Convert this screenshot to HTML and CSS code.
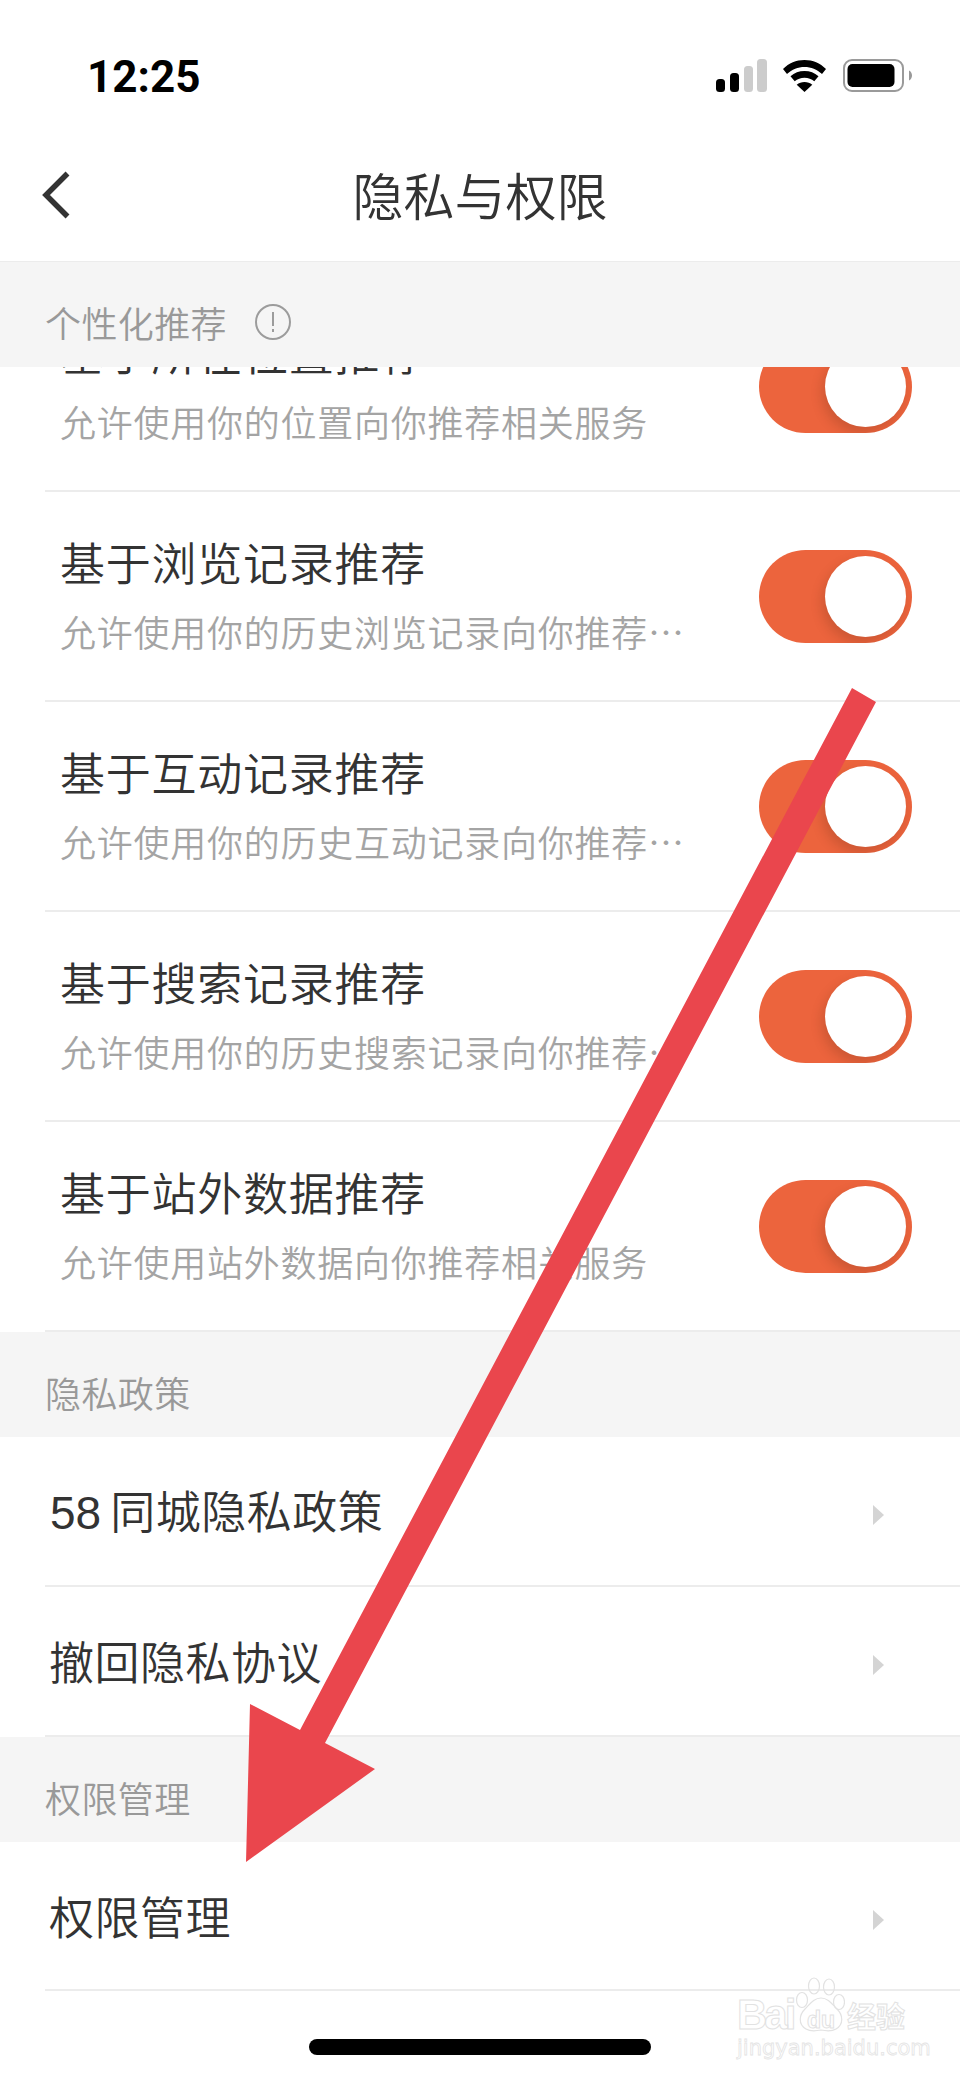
FILE: index.html
```html
<!DOCTYPE html>
<html lang="zh-CN">
<head>
<meta charset="utf-8">
<title>隐私与权限</title>
<link rel="stylesheet" href="styles.css">
</head>
<body>
<div class="page">
  <div class="status">
    <span class="time">12:25</span>
    <div class="status-icons">
      <svg class="signal" width="51" height="33" viewBox="0 0 51 33"><rect x="0" y="20" width="9" height="13" rx="3.5" fill="#000"/><rect x="14" y="14" width="9" height="19" rx="3.5" fill="#000"/><rect x="28" y="7" width="9" height="26" rx="3.5" fill="#ccc"/><rect x="41" y="0" width="10" height="33" rx="3.5" fill="#ccc"/></svg>
      <svg class="wifi" width="43" height="32" viewBox="0 0 43 32"><path d="M21.5 0C13 0 6 3 0 9l4 5c5-4.500 11-7 17.500-7S34 9.500 39 14l4-5C37 3 30 0 21.500 0z" fill="#000"/><path d="M21.500 11c-5.500 0-10 1.800-14 5.300l4.200 5c2.800-2.300 6-3.500 9.800-3.500s7 1.200 9.800 3.500l4.200-5c-4-3.500-8.500-5.300-14-5.300z" fill="#000"/><path d="M21.500 22c-3 0-5.500 1-7.800 2.800L21.500 32l7.800-7.200C27 23 24.500 22 21.500 22z" fill="#000"/></svg>
      <svg class="battery" width="69" height="33" viewBox="0 0 69 33"><rect x="1" y="1" width="59" height="31" rx="8" fill="none" stroke="#9a9a9a" stroke-width="2"/><rect x="4.500" y="5" width="47" height="23" rx="5" fill="#000"/><path d="M66 11.500c1.800.8 3 2.800 3 5s-1.200 4.200-3 5z" fill="#999"/></svg>
    </div>
  </div>
  <header class="nav">
    <svg class="back" width="28" height="50" viewBox="0 0 28 50"><path d="M25.500 3.500 4 25l21.500 21.500" fill="none" stroke="#333" stroke-width="5.500"/></svg>
    <h1 class="nav-title">隐私与权限</h1>
  </header>

  <div class="section section-first"><span>个性化推荐</span>
    <svg class="info" width="36" height="36" viewBox="0 0 36 36"><circle cx="18" cy="18" r="17" fill="none" stroke="#9c9c9c" stroke-width="2"/><rect x="17" y="8" width="2" height="14" fill="#9c9c9c"/><rect x="17" y="25" width="2" height="3" fill="#9c9c9c"/></svg>
  </div>

  <div class="clip-row">
    <div class="row switch-row">
      <div class="row-text"><div class="row-title">基于所在位置推荐</div><div class="row-sub">允许使用你的位置向你推荐相关服务</div></div>
      <div class="toggle"></div>
    </div>
  </div>
  <div class="row switch-row">
    <div class="row-text"><div class="row-title">基于浏览记录推荐</div><div class="row-sub">允许使用你的历史浏览记录向你推荐相关服务</div></div>
    <div class="toggle"></div>
  </div>
  <div class="row switch-row">
    <div class="row-text"><div class="row-title">基于互动记录推荐</div><div class="row-sub">允许使用你的历史互动记录向你推荐相关服务</div></div>
    <div class="toggle"></div>
  </div>
  <div class="row switch-row">
    <div class="row-text"><div class="row-title">基于搜索记录推荐</div><div class="row-sub">允许使用你的历史搜索记录向你推荐相关服务</div></div>
    <div class="toggle"></div>
  </div>
  <div class="row switch-row">
    <div class="row-text"><div class="row-title">基于站外数据推荐</div><div class="row-sub">允许使用站外数据向你推荐相关服务</div></div>
    <div class="toggle"></div>
  </div>

  <div class="section"><span>隐私政策</span></div>
  <div class="row link-row"><span class="link-title"><span class="num">58</span>同城隐私政策</span><svg class="caret" width="11" height="20" viewBox="0 0 11 20"><path d="M0 0l11 10L0 20z" fill="#d4d4d4"/></svg></div>
  <div class="row link-row"><span class="link-title">撤回隐私协议</span><svg class="caret" width="11" height="20" viewBox="0 0 11 20"><path d="M0 0l11 10L0 20z" fill="#d4d4d4"/></svg></div>
  <div class="section"><span>权限管理</span></div>
  <div class="row link-row link-last"><span class="link-title">权限管理</span><svg class="caret" width="11" height="20" viewBox="0 0 11 20"><path d="M0 0l11 10L0 20z" fill="#d4d4d4"/></svg></div>

  <div class="home-bar"></div>

  <svg class="arrow" width="960" height="2079" viewBox="0 0 960 2079"><path d="M852 688 876 702 325 1743 375 1769 246 1862 250 1704 300 1730z" fill="#ea464d"/></svg>

  <div class="watermark">
    <div class="wm-top">
      <span class="wm-bai">Bai</span>
      <div class="wm-paw">
        <svg width="50" height="56" viewBox="0 0 50 56"><g fill="none" stroke="#e2e2e2" stroke-width="1.200"><ellipse cx="7" cy="23" rx="5.500" ry="7.500"/><ellipse cx="19" cy="9" rx="5.500" ry="8"/><ellipse cx="34" cy="10" rx="5.500" ry="8"/><ellipse cx="44" cy="25" rx="5.500" ry="7.500"/><path d="M26 21c7 0 11 6 16 11 6 6 7 15-1 20-5 3-10 2-15 1-5 1-10 2-15-1-8-5-7-14-1-20 5-5 9-11 16-11z"/></g></svg>
        <span class="wm-du">du</span>
      </div>
      <span class="wm-jy">经验</span>
    </div>
    <div class="wm-url">jingyan.baidu.com</div>
  </div>
</div>
</body>
</html>
```

FILE: styles.css
```css
* { box-sizing: border-box; }
html, body { margin: 0; padding: 0; background: #fff; }
body { font-family: "Noto Sans CJK SC", "Liberation Sans", sans-serif; font-weight: 350; }
.page { position: relative; width: 960px; height: 2079px; overflow: hidden; background: #fff; }

.status { height: 110px; display: flex; align-items: flex-start; justify-content: space-between; padding: 60px 48px 0 87px; }
.time { font-family: Roboto, "Liberation Sans", sans-serif; font-weight: 700; font-size: 44px; line-height: 34px; color: #000; }
.status-icons { display: flex; align-items: flex-start; margin-top: -1px; }
.signal { margin-right: 16px; }
.wifi { margin-right: 17px; margin-top: 1px; }

.nav { height: 152px; position: relative; display: flex; align-items: center; justify-content: center; border-bottom: 1px solid #ececec; padding-top: 16px; }
.back { position: absolute; left: 42px; top: 60px; }
.nav-title { margin: 0; font-size: 51px; font-weight: 350; color: #333; line-height: 60px; }

.section { height: 105px; background: #f5f5f5; padding: 14px 0 0 45px; display: flex; align-items: center; color: #999; font-size: 36px; letter-spacing: .4px; line-height: 44px; }
.section-first { gap: 28px; }

.clip-row { height: 125px; overflow: hidden; display: flex; flex-direction: column; justify-content: flex-end; margin-left: 45px; }
.clip-row .row { margin-left: 0; flex: none; }

.row { margin-left: 45px; border-bottom: 2px solid #ececec; display: flex; align-items: center; justify-content: space-between; }
.switch-row { height: 210px; padding: 0 48px 0 15px; }
.row-text { width: 630px; margin-bottom: 5px; }
.row-title { font-size: 45px; letter-spacing: .75px; line-height: 60px; color: #333; margin-bottom: 14px; }
.row-sub { font-size: 36px; letter-spacing: .75px; line-height: 50px; color: #a4a4a4; white-space: nowrap; overflow: hidden; text-overflow: ellipsis; }

.toggle { position: relative; width: 153px; height: 93px; border-radius: 47px; background: #ec643d; overflow: hidden; flex: none; }
.toggle::after { content: ""; position: absolute; top: 6px; right: 6px; width: 81px; height: 81px; border-radius: 50%; background: #fff; box-shadow: -3px 6px 12px rgba(90, 40, 20, .22); }

.link-row { height: 150px; padding: 0 76px 0 4px; }
.link-last { height: 149px; }
.link-title { font-size: 45px; letter-spacing: .5px; color: #333; line-height: 60px; }
.num { font-family: "Liberation Sans", sans-serif; font-weight: 400; font-size: 46px; letter-spacing: 0; margin-right: 9px; margin-left: 1px; }
.caret { flex: none; margin-top: 8px; }

.home-bar { position: absolute; left: 309px; top: 2039px; width: 342px; height: 16px; border-radius: 8px; background: #000; }
.arrow { position: absolute; left: 0; top: 0; pointer-events: none; }

.watermark { position: absolute; left: 737px; top: 1977px; width: 175px; color: transparent; }
.wm-top { display: flex; align-items: flex-end; height: 56px; }
.wm-bai { font-family: "Liberation Sans", sans-serif; font-weight: 700; font-size: 42px; letter-spacing: -3px; line-height: 36px; width: 58px; flex: none; -webkit-text-stroke: 1px #e2e2e2; }
.wm-paw { position: relative; width: 50px; height: 56px; flex: none; }
.wm-paw svg { display: block; }
.wm-du { position: absolute; left: 12px; top: 30px; font-family: "Liberation Sans", sans-serif; font-weight: 700; font-size: 23px; line-height: 26px; -webkit-text-stroke: 1px #e2e2e2; }
.wm-jy { margin-left: 2px; font-size: 29px; line-height: 36px; font-weight: 700; white-space: nowrap; -webkit-text-stroke: 1px #e2e2e2; }
.wm-url { margin-top: 3px; font-family: "DejaVu Sans", sans-serif; font-weight: 400; font-size: 21px; line-height: 24px; -webkit-text-stroke: .8px #e4e4e4; white-space: nowrap; }
```
